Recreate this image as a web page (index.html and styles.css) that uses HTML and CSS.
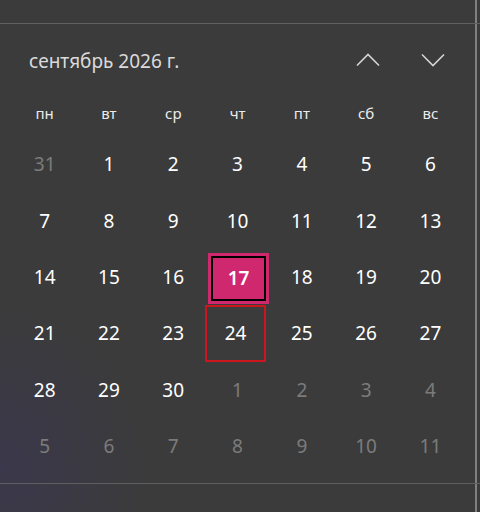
FILE: index.html
```html
<!DOCTYPE html>
<html lang="ru">
<head>
<meta charset="utf-8">
<title>Календарь</title>
<link rel="stylesheet" href="styles.css">
</head>
<body>
<div class="flyout">
  <div class="strip strip-top"><div class="strip-inner"></div></div>
  <div class="divider"></div>
  <div class="strip strip-main">
    <div class="panel">
      <div class="header">
        <div class="title">сентябрь 2026 г.</div>
        <div class="nav">
          <button class="nav-btn" aria-label="Предыдущий месяц">
            <svg width="24" height="14" viewBox="0 0 24 14"><polyline points="1,12.5 12,1.5 23,12.5" fill="none" stroke="#d4d4d4" stroke-width="1.6"/></svg>
          </button>
          <button class="nav-btn" aria-label="Следующий месяц">
            <svg width="24" height="14" viewBox="0 0 24 14"><polyline points="1,1.5 12,12.5 23,1.5" fill="none" stroke="#d4d4d4" stroke-width="1.6"/></svg>
          </button>
        </div>
      </div>
      <div class="weekdays">
        <div class="wd">пн</div><div class="wd">вт</div><div class="wd">ср</div><div class="wd">чт</div><div class="wd">пт</div><div class="wd">сб</div><div class="wd">вс</div>
      </div>
      <div class="days">
        <div class="day other">31</div><div class="day">1</div><div class="day">2</div><div class="day">3</div><div class="day">4</div><div class="day">5</div><div class="day">6</div>
        <div class="day">7</div><div class="day">8</div><div class="day">9</div><div class="day">10</div><div class="day">11</div><div class="day">12</div><div class="day">13</div>
        <div class="day">14</div><div class="day">15</div><div class="day">16</div><div class="day"><span class="today">17</span></div><div class="day">18</div><div class="day">19</div><div class="day">20</div>
        <div class="day">21</div><div class="day">22</div><div class="day">23</div><div class="day"><span class="focus">24</span></div><div class="day">25</div><div class="day">26</div><div class="day">27</div>
        <div class="day">28</div><div class="day">29</div><div class="day">30</div><div class="day other">1</div><div class="day other">2</div><div class="day other">3</div><div class="day other">4</div>
        <div class="day other">5</div><div class="day other">6</div><div class="day other">7</div><div class="day other">8</div><div class="day other">9</div><div class="day other">10</div><div class="day other">11</div>
      </div>
    </div>
  </div>
  <div class="divider"></div>
  <div class="strip strip-foot"><div class="strip-inner"></div></div>
</div>
</body>
</html>
```
FILE: styles.css
```css
html, body {
  margin: 0;
  padding: 0;
}
body {
  width: 480px;
  height: 512px;
  overflow: hidden;
  background-color: #3b3b3b;
  background-image: radial-gradient(ellipse 150px 170px at 0px 470px, rgba(58, 50, 105, 0.35), rgba(58, 50, 105, 0) 100%);
  font-family: "Noto Sans", "Open Sans", sans-serif;
  color: #fff;
}
.flyout {
  display: flex;
  flex-direction: column;
  height: 512px;
}
.strip {
  display: flex;
}
.strip-top {
  height: 23px;
}
.strip-main {
  height: 459px;
}
.strip-foot {
  flex: 1;
}
.strip-inner,
.panel {
  width: 475px;
  border-right: 2px solid #808080;
}
.divider {
  height: 1px;
  background: #606060;
}
.panel {
  display: flex;
  flex-direction: column;
}
.header {
  height: 66px;
  box-sizing: border-box;
  padding: 8px 0 0 29px;
  display: flex;
  align-items: center;
  justify-content: space-between;
}
.title {
  font-size: 19px;
  color: #dadada;
}
.nav {
  display: flex;
  gap: 41px;
  margin-right: 30px;
  padding-bottom: 2px;
}
.nav-btn {
  width: 24px;
  height: 14px;
  padding: 0;
  border: 0;
  background: none;
  display: block;
}
.nav-btn svg {
  display: block;
}
.weekdays,
.days {
  display: grid;
  grid-template-columns: repeat(7, 64.3px);
  margin-left: 12.5px;
}
.weekdays {
  height: 46px;
  align-items: center;
}
.wd {
  text-align: center;
  font-size: 15px;
  color: #ececec;
}
.days {
  grid-auto-rows: 56.4px;
}
.day {
  display: flex;
  align-items: center;
  justify-content: center;
  font-size: 19px;
  color: #fff;
}
.day.other {
  color: #7b7b7b;
}
.today {
  width: 61px;
  height: 51px;
  box-sizing: border-box;
  margin-left: 2px;
  margin-top: 3px;
  background: #cf286f;
  border: 3px solid #cf286f;
  outline: 2px solid #000;
  outline-offset: -5px;
  display: flex;
  align-items: center;
  justify-content: center;
  font-weight: 600;
}
.focus {
  width: 63px;
  height: 57px;
  box-sizing: border-box;
  margin-right: 4px;
  border: 2px solid #cc151d;
  display: flex;
  align-items: center;
  justify-content: center;
}
```
